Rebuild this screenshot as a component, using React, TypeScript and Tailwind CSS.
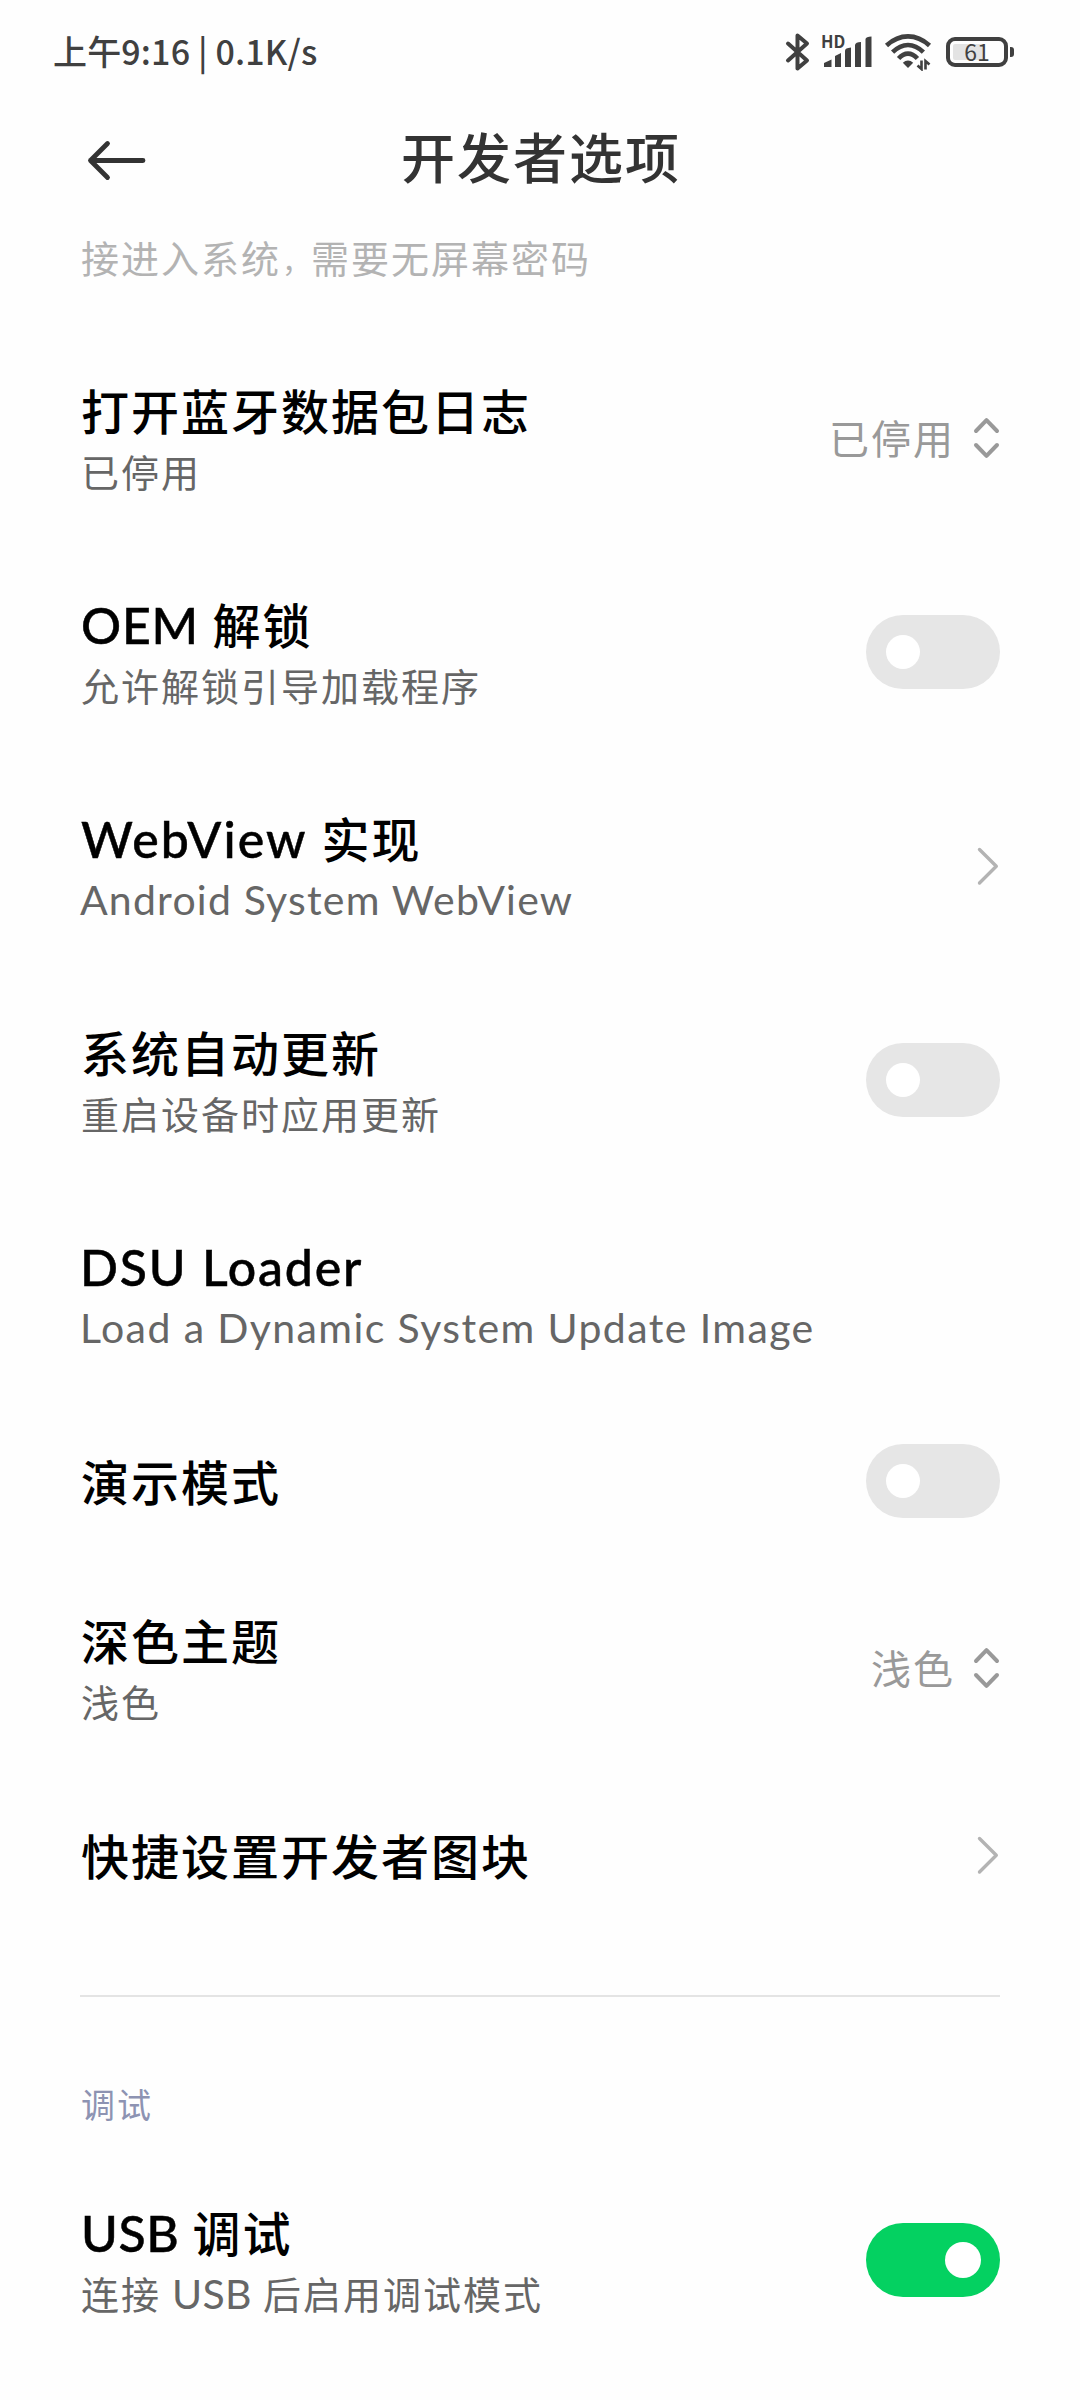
import React from "react";

// ============================================================
// App.tsx — Developer options page (phone settings)
// ============================================================

type Control =
  | { kind: "toggle"; on: boolean }
  | { kind: "select"; value: string }
  | { kind: "link" }
  | { kind: "none" };

interface Item {
  title: React.ReactNode;
  summary?: React.ReactNode;
  control: Control;
}

/** Latin run inside a Chinese line, set slightly larger than the CJK glyphs */
function Latin({ className = "", children }: { className?: string; children: React.ReactNode }) {
  return <span className={`font-['Lato','Noto_Sans_CJK_SC',sans-serif] leading-none ${className}`}>{children}</span>;
}

const systemItems: Item[] = [
  {
    title: "打开蓝牙数据包日志",
    summary: "已停用",
    control: { kind: "select", value: "已停用" },
  },
  {
    title: (
      <>
        <Latin className="text-[50px] tracking-[0.8px] [-webkit-text-stroke:0.5px_black]">OEM </Latin>解锁
      </>
    ),
    summary: "允许解锁引导加载程序",
    control: { kind: "toggle", on: false },
  },
  {
    title: (
      <>
        <Latin className="text-[50px] tracking-[2.1px] [-webkit-text-stroke:0.5px_black]">WebView </Latin>实现
      </>
    ),
    summary: <Latin className="-ml-px text-[41px] tracking-[1.2px]">Android System WebView</Latin>,
    control: { kind: "link" },
  },
  {
    title: "系统自动更新",
    summary: "重启设备时应用更新",
    control: { kind: "toggle", on: false },
  },
  {
    title: <Latin className="-ml-px text-[50px] tracking-[1.8px] [-webkit-text-stroke:0.5px_black]">DSU Loader</Latin>,
    summary: <Latin className="-ml-px text-[41px] tracking-[1.4px]">Load a Dynamic System Update Image</Latin>,
    control: { kind: "none" },
  },
  { title: "演示模式", control: { kind: "toggle", on: false } },
  { title: "深色主题", summary: "浅色", control: { kind: "select", value: "浅色" } },
  { title: "快捷设置开发者图块", control: { kind: "link" } },
];

const debugItems: Item[] = [
  {
    title: (
      <>
        <Latin className="text-[50px] tracking-[0.6px] [-webkit-text-stroke:0.5px_black]">USB </Latin>调试
      </>
    ),
    summary: (
      <>
        连接<Latin className="text-[41px] tracking-[0.4px]"> USB </Latin>后启用调试模式
      </>
    ),
    control: { kind: "toggle", on: true },
  },
];

// ---- Status bar ----

function BluetoothIcon() {
  return (
    <svg width="26" height="40" viewBox="0 0 26 40" fill="none" stroke="#404040" strokeWidth="4" strokeLinecap="round" strokeLinejoin="round">
      <path d="M3 11.5 L22 28.5 L12.5 36.5 V3.5 L22 11.5 L3 28.5" />
    </svg>
  );
}

function SignalIcon() {
  return (
    <div className="relative h-8 w-[50px]">
      <svg width="50" height="32" viewBox="0 0 50 32" fill="#404040">
        <path d="M2 27 L9.5 23.5 V31 H2 Z" />
        <path d="M13 20 L19 17 V31 H13 Z" />
        <path d="M23 14.5 Q23 12 29 11.5 V31 H23 Z" />
        <path d="M33 9 Q33.5 6 39 6 V31 H33 Z" />
        <path d="M43.5 3 Q44 0.5 49.5 0.5 V31 H43.5 Z" />
      </svg>
      <span className="absolute -top-[3px] -left-[1px] text-[16.5px] leading-none font-bold">HD</span>
    </div>
  );
}

function WifiIcon() {
  return (
    <svg width="48" height="38" viewBox="0 0 48 38" fill="none" stroke="#404040" strokeWidth="4.6">
      <path d="M2.5 12.5 Q12.5 3.4 24 3.4 T45.5 12.5" />
      <path d="M8.6 19.2 Q16 12 24 12 T39.4 19.2" />
      <path d="M14.6 25.6 Q19 20.6 24 20.6 T33.4 25.6" />
      <path d="M24 35 L18.8 29.8 Q24 25.4 29.2 29.8 Z" fill="#404040" stroke="none" />
      <path d="M37.5 27.5 V36 L33.5 32.5 M41.5 36.5 V28 L45.5 31.5" strokeWidth="2.6" />
    </svg>
  );
}

function Battery({ level }: { level: number }) {
  return (
    <div className="flex items-center gap-[2px]">
      <div className="relative flex h-[30px] w-[62px] items-center justify-center rounded-[9px] border-4 border-[#404040]">
        <div className="absolute top-[3px] bottom-[3px] left-[3px] rounded-[2px] bg-[#e3e3e3]" style={{ width: `${level * 0.5}px` }} />
        <span className="relative -top-px text-[23px] leading-none">{level}</span>
      </div>
      <div className="h-[10px] w-1 rounded-r-[3px] bg-[#404040]" />
    </div>
  );
}

function StatusBar() {
  return (
    <div className="flex h-[104px] items-center justify-between pr-[66px] pl-[53px] text-[#404040]">
      <div className="pb-[2px] text-[34px] leading-none font-medium tracking-[0.15px] whitespace-pre">上午9:16 | 0.1K/s</div>
      <div className="flex items-center">
        <BluetoothIcon />
        <div className="w-[11px]" />
        <SignalIcon />
        <div className="w-[12px]" />
        <WifiIcon />
        <div className="w-[14px]" />
        <Battery level={61} />
      </div>
    </div>
  );
}

// ---- Header ----

function Header() {
  return (
    <div className="grid h-[112px] grid-cols-[1fr_auto_1fr] items-center px-[86px]">
      <svg width="62" height="44" viewBox="0 0 62 44" fill="none" stroke="#333333" strokeWidth="4.8" strokeLinecap="round" strokeLinejoin="round">
        <path d="M57 22.5 H4.5 M21.5 5.5 L4.5 22.5 L21.5 39.5" />
      </svg>
      <h1 className="pb-[8px] pl-[2px] text-[54px] leading-[72px] font-medium tracking-[2px] text-[#333333]">开发者选项</h1>
      <div />
    </div>
  );
}

// ---- Row controls ----

function Toggle({ on }: { on: boolean }) {
  return on ? (
    <div className="flex h-[74px] w-[134px] items-center justify-end rounded-full bg-[#04d161] px-[19px]">
      <div className="size-9 rounded-full bg-white" />
    </div>
  ) : (
    <div className="flex h-[74px] w-[134px] items-center rounded-full bg-[#e6e6e6] px-5">
      <div className="size-[34px] rounded-full bg-white" />
    </div>
  );
}

function RowControl({ control }: { control: Control }) {
  switch (control.kind) {
    case "toggle":
      return <Toggle on={control.on} />;
    case "select":
      return (
        <div className="flex items-center gap-[17px]">
          <span className="pb-[2px] text-[40px] leading-[56px] tracking-[2px] text-[#999999]">{control.value}</span>
          <svg width="28" height="42" viewBox="0 0 28 42" fill="none" stroke="#999999" strokeWidth="4" strokeLinecap="round" strokeLinejoin="round">
            <path d="M4 14 L14.5 3.2 L25 14 M4 28 L14.5 38.8 L25 28" />
          </svg>
        </div>
      );
    case "link":
      return (
        <svg width="24" height="40" viewBox="0 0 24 40" fill="none" stroke="#b3b3b3" strokeWidth="3.4" strokeLinecap="round" strokeLinejoin="round">
          <path d="M3.5 3.5 L20.3 20.3 L3.5 37" />
        </svg>
      );
    default:
      return null;
  }
}

function Row({ title, summary, control }: Item) {
  return (
    <div className={`flex items-center justify-between ${summary ? "h-[214px]" : "h-[160px]"}`}>
      <div className="pl-px whitespace-pre">
        <div className="h-16 text-[48px] leading-[62px] font-medium tracking-[2px] text-black">{title}</div>
        {summary && <div className="h-14 text-[38px] leading-[58px] tracking-[2px] text-[#666666]">{summary}</div>}
      </div>
      <RowControl control={control} />
    </div>
  );
}

export default function App() {
  return (
    <div className="h-[2400px] w-[1080px] overflow-hidden bg-[#fefefe] font-['Noto_Sans_CJK_SC',sans-serif]">
      <StatusBar />
      <Header />
      <div className="px-20">
        {/* Tail of the summary scrolled under the header */}
        <p className="flex h-[115px] items-baseline pt-[13px] pl-px text-[38px] leading-[56px] tracking-[2px] text-[#b3b3b3]">
          接进入系统<span className="pl-px text-[29px] tracking-normal">，</span>需要无屏幕密码
        </p>

        {systemItems.map((item, i) => (
          <Row key={i} {...item} />
        ))}

        <div className="mt-[60px] h-[2px] bg-[#e4e4e4]" />

        <h2 className="mt-[78px] h-[78px] pl-px text-[34px] leading-[58px] tracking-[2px] text-[#8d93b2]">调试</h2>

        {debugItems.map((item, i) => (
          <Row key={i} {...item} />
        ))}
      </div>
    </div>
  );
}
